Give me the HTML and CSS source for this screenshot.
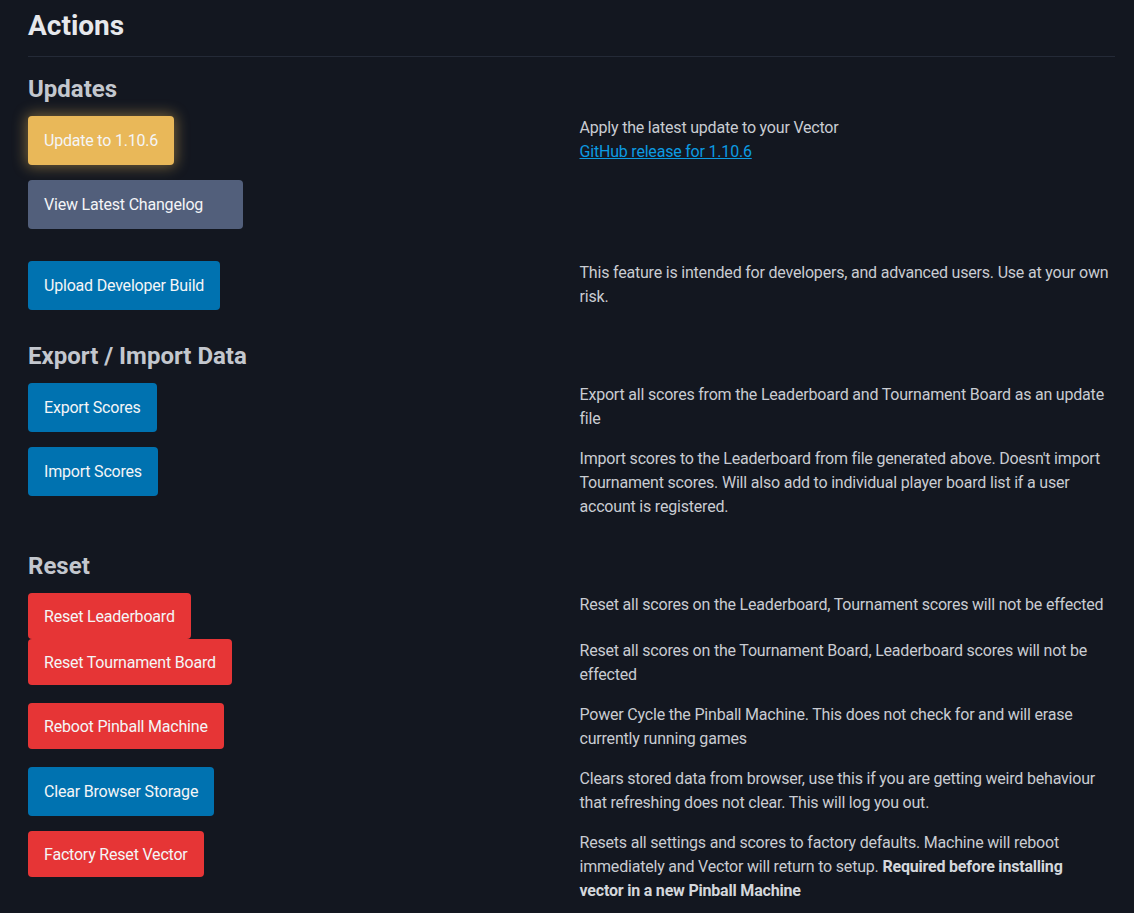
FILE: index.html
```html
<!DOCTYPE html>
<html lang="en">
<head>
<meta charset="utf-8">
<title>Actions</title>
<link rel="stylesheet" href="styles.css">
</head>
<body>
<main class="page">
  <h1 class="title">Actions</h1>
  <hr class="rule">

  <h2 class="section-title first">Updates</h2>
  <div class="row">
    <div class="cell"><button class="btn btn-yellow">Update to 1.10.6</button></div>
    <div class="cell"><p class="desc">Apply the latest update to your Vector<br><a class="link" href="#">GitHub release for 1.10.6</a></p></div>
  </div>
  <div class="row row-spaced">
    <div class="cell"><button class="btn btn-slate btn-wide">View Latest Changelog</button></div>
    <div class="cell"></div>
  </div>
  <div class="row">
    <div class="cell"><button class="btn btn-blue">Upload Developer Build</button></div>
    <div class="cell"><p class="desc">This feature is intended for developers, and advanced users. Use at your own risk.</p></div>
  </div>

  <h2 class="section-title">Export / Import Data</h2>
  <div class="row">
    <div class="cell"><button class="btn btn-blue">Export Scores</button></div>
    <div class="cell"><p class="desc">Export all scores from the Leaderboard and Tournament Board as an update file</p></div>
  </div>
  <div class="row">
    <div class="cell"><button class="btn btn-blue">Import Scores</button></div>
    <div class="cell"><p class="desc">Import scores to the Leaderboard from file generated above. Doesn't import Tournament scores. Will also add to individual player board list if a user<br>account is registered.</p></div>
  </div>

  <h2 class="section-title">Reset</h2>
  <div class="row">
    <div class="cell"><button class="btn btn-red">Reset Leaderboard</button></div>
    <div class="cell"><p class="desc">Reset all scores on the Leaderboard, Tournament scores will not be effected</p></div>
  </div>
  <div class="row">
    <div class="cell"><button class="btn btn-red">Reset Tournament Board</button></div>
    <div class="cell"><p class="desc">Reset all scores on the Tournament Board, Leaderboard scores will not be effected</p></div>
  </div>
  <div class="row">
    <div class="cell"><button class="btn btn-red">Reboot Pinball Machine</button></div>
    <div class="cell"><p class="desc">Power Cycle the Pinball Machine. This does not check for and will erase currently running games</p></div>
  </div>
  <div class="row">
    <div class="cell"><button class="btn btn-blue">Clear Browser Storage</button></div>
    <div class="cell"><p class="desc">Clears stored data from browser, use this if you are getting weird behaviour that refreshing does not clear. This will log you out.</p></div>
  </div>
  <div class="row">
    <div class="cell"><button class="btn btn-red">Factory Reset Vector</button></div>
    <div class="cell"><p class="desc">Resets all settings and scores to factory defaults. Machine will reboot immediately and Vector will return to setup. <strong class="strong">Required before installing<br>vector in a new Pinball Machine</strong></p></div>
  </div>
</main>
</body>
</html>
```

FILE: styles.css
```css
html, body {
  margin: 0;
  padding: 0;
  background: #131720;
}

body {
  font-family: Roboto, "Liberation Sans", sans-serif;
  font-size: 16px;
  line-height: 24px;
  letter-spacing: -0.2px;
  color: #c9ccd2;
}

.page {
  padding: 8px 19px 0 28px;
}

.title {
  margin: 0 0 12px;
  font-size: 28px;
  line-height: 36px;
  font-weight: 700;
  letter-spacing: 0;
  color: #e6e8ec;
}

.rule {
  margin: 0 0 16px;
  border: 0;
  height: 1px;
  background: #242a37;
}

.section-title {
  margin: 15px 0 11px;
  font-size: 24px;
  line-height: 32px;
  font-weight: 700;
  letter-spacing: 0;
  color: #c3c7ce;
}

.section-title.first {
  margin-top: 0;
}

.row {
  display: grid;
  grid-template-columns: 1fr 1fr;
  column-gap: 16px;
}

.row-spaced {
  margin-bottom: 32px;
}

.cell {
  min-width: 0;
}

.desc {
  margin: 0 0 16px;
}

.link {
  color: #0c9be2;
  text-decoration: underline;
}

.strong {
  font-weight: 700;
  color: #d4d7dc;
}

.btn {
  box-sizing: border-box;
  display: inline-flex;
  align-items: center;
  height: 49px;
  padding: 0 16px;
  border: 0;
  border-radius: 4px;
  font-family: inherit;
  font-size: 16px;
  letter-spacing: -0.2px;
  color: #f4f5f7;
  cursor: pointer;
}

.btn-wide {
  min-width: 215px;
}

.btn-yellow {
  background: #e9b859;
  box-shadow: 0 0 14px 2px rgba(233, 184, 89, 0.45);
}

.btn-slate {
  background: #525f7b;
}

.btn-blue {
  background: #0072b0;
}

.btn-red {
  height: 46px;
  background: #e63536;
}
```
